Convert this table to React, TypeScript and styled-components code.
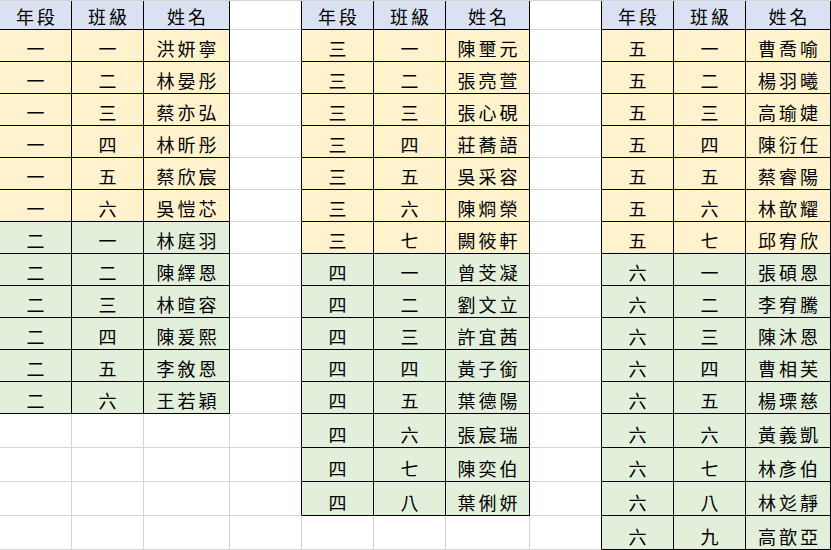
import React from "react";
import styled, { createGlobalStyle } from "styled-components";

const GlobalStyle = createGlobalStyle`
  html, body { margin: 0; padding: 0; background: #ffffff; }
  body { overflow: hidden; }
`;

const COL_WIDTHS = [72, 72, 86, 72, 72, 72, 84, 72, 72, 72, 85];
const ROW_HEIGHTS = [29, ...Array(12).fill(32), ...Array(4).fill(34)];

type Fill = "none" | "head" | "yellow" | "green";

const FILLS: Record<Fill, string> = {
  none: "#ffffff",
  head: "#d9e1f2",
  yellow: "#fff2cc",
  green: "#e2efda",
};

const Sheet = styled.div`
  display: grid;
  grid-template-columns: ${COL_WIDTHS.map((w) => `${w}px`).join(" ")};
  grid-template-rows: ${ROW_HEIGHTS.map((h) => `${h}px`).join(" ")};
  width: 831px;
  border-top: 1px solid #d4d4d4;
  font-family: "Noto Sans CJK TC", "Noto Sans CJK SC", sans-serif;
  color: #000000;
`;

const Cell = styled.div<{ $fill: Fill; $right: boolean; $bottom: boolean }>`
  box-sizing: border-box;
  display: flex;
  align-items: flex-end;
  justify-content: center;
  background: ${(p) => FILLS[p.$fill]};
  border-right: 1px solid ${(p) => (p.$right ? "#000000" : "#d4d4d4")};
  border-bottom: 1px solid ${(p) => (p.$bottom ? "#000000" : "#d4d4d4")};
  padding: 0 0 4px 3px;
  font-size: 18px;
  line-height: 18px;
  letter-spacing: 3px;
  white-space: nowrap;
  overflow: hidden;
`;

type Row = [string, string, string];

const t1: Row[] = [
  ["一", "一", "洪妍寧"],
  ["一", "二", "林晏彤"],
  ["一", "三", "蔡亦弘"],
  ["一", "四", "林昕彤"],
  ["一", "五", "蔡欣宸"],
  ["一", "六", "吳愷芯"],
  ["二", "一", "林庭羽"],
  ["二", "二", "陳繹恩"],
  ["二", "三", "林暄容"],
  ["二", "四", "陳爰熙"],
  ["二", "五", "李敘恩"],
  ["二", "六", "王若穎"],
];

const t2: Row[] = [
  ["三", "一", "陳壐元"],
  ["三", "二", "張亮萱"],
  ["三", "三", "張心硯"],
  ["三", "四", "莊蕎語"],
  ["三", "五", "吳采容"],
  ["三", "六", "陳烱榮"],
  ["三", "七", "闕筱軒"],
  ["四", "一", "曾芠凝"],
  ["四", "二", "劉文立"],
  ["四", "三", "許宜茜"],
  ["四", "四", "黃子銜"],
  ["四", "五", "葉德陽"],
  ["四", "六", "張宸瑞"],
  ["四", "七", "陳奕伯"],
  ["四", "八", "葉俐妍"],
];

const t3: Row[] = [
  ["五", "一", "曹喬喻"],
  ["五", "二", "楊羽曦"],
  ["五", "三", "高瑜婕"],
  ["五", "四", "陳衍任"],
  ["五", "五", "蔡睿陽"],
  ["五", "六", "林歆耀"],
  ["五", "七", "邱宥欣"],
  ["六", "一", "張碩恩"],
  ["六", "二", "李宥騰"],
  ["六", "三", "陳沐恩"],
  ["六", "四", "曹相芙"],
  ["六", "五", "楊瑮慈"],
  ["六", "六", "黃義凱"],
  ["六", "七", "林彥伯"],
  ["六", "八", "林彣靜"],
  ["六", "九", "高歆亞"],
];

const HEADER: Row = ["年段", "班級", "姓名"];
const YELLOW_GRADES = ["一", "三", "五"];

const tables: { col: number; rows: Row[] }[] = [
  { col: 0, rows: t1 },
  { col: 4, rows: t2 },
  { col: 8, rows: t3 },
];

type CellInfo = { text: string; fill: Fill; inTable: boolean };

function buildGrid(): CellInfo[][] {
  const grid: CellInfo[][] = ROW_HEIGHTS.map(() =>
    COL_WIDTHS.map(() => ({ text: "", fill: "none" as Fill, inTable: false }))
  );
  tables.forEach(({ col, rows }) => {
    const all: Row[] = [HEADER, ...rows];
    all.forEach((row, r) => {
      const fill: Fill =
        r === 0 ? "head" : YELLOW_GRADES.includes(row[0]) ? "yellow" : "green";
      row.forEach((text, i) => {
        grid[r][col + i] = { text, fill, inTable: true };
      });
    });
  });
  return grid;
}

export default function App() {
  const grid = buildGrid();
  return (
    <>
      <GlobalStyle />
      <Sheet>
        {grid.map((row, r) =>
          row.map((cell, c) => {
            const rightNeighbor = row[c + 1];
            const below = grid[r + 1]?.[c];
            const right = cell.inTable || (!!rightNeighbor && rightNeighbor.inTable);
            const bottom = cell.inTable || (!!below && below.inTable);
            return (
              <Cell key={`${r}-${c}`} $fill={cell.fill} $right={right} $bottom={bottom}>
                {cell.text}
              </Cell>
            );
          })
        )}
      </Sheet>
    </>
  );
}
